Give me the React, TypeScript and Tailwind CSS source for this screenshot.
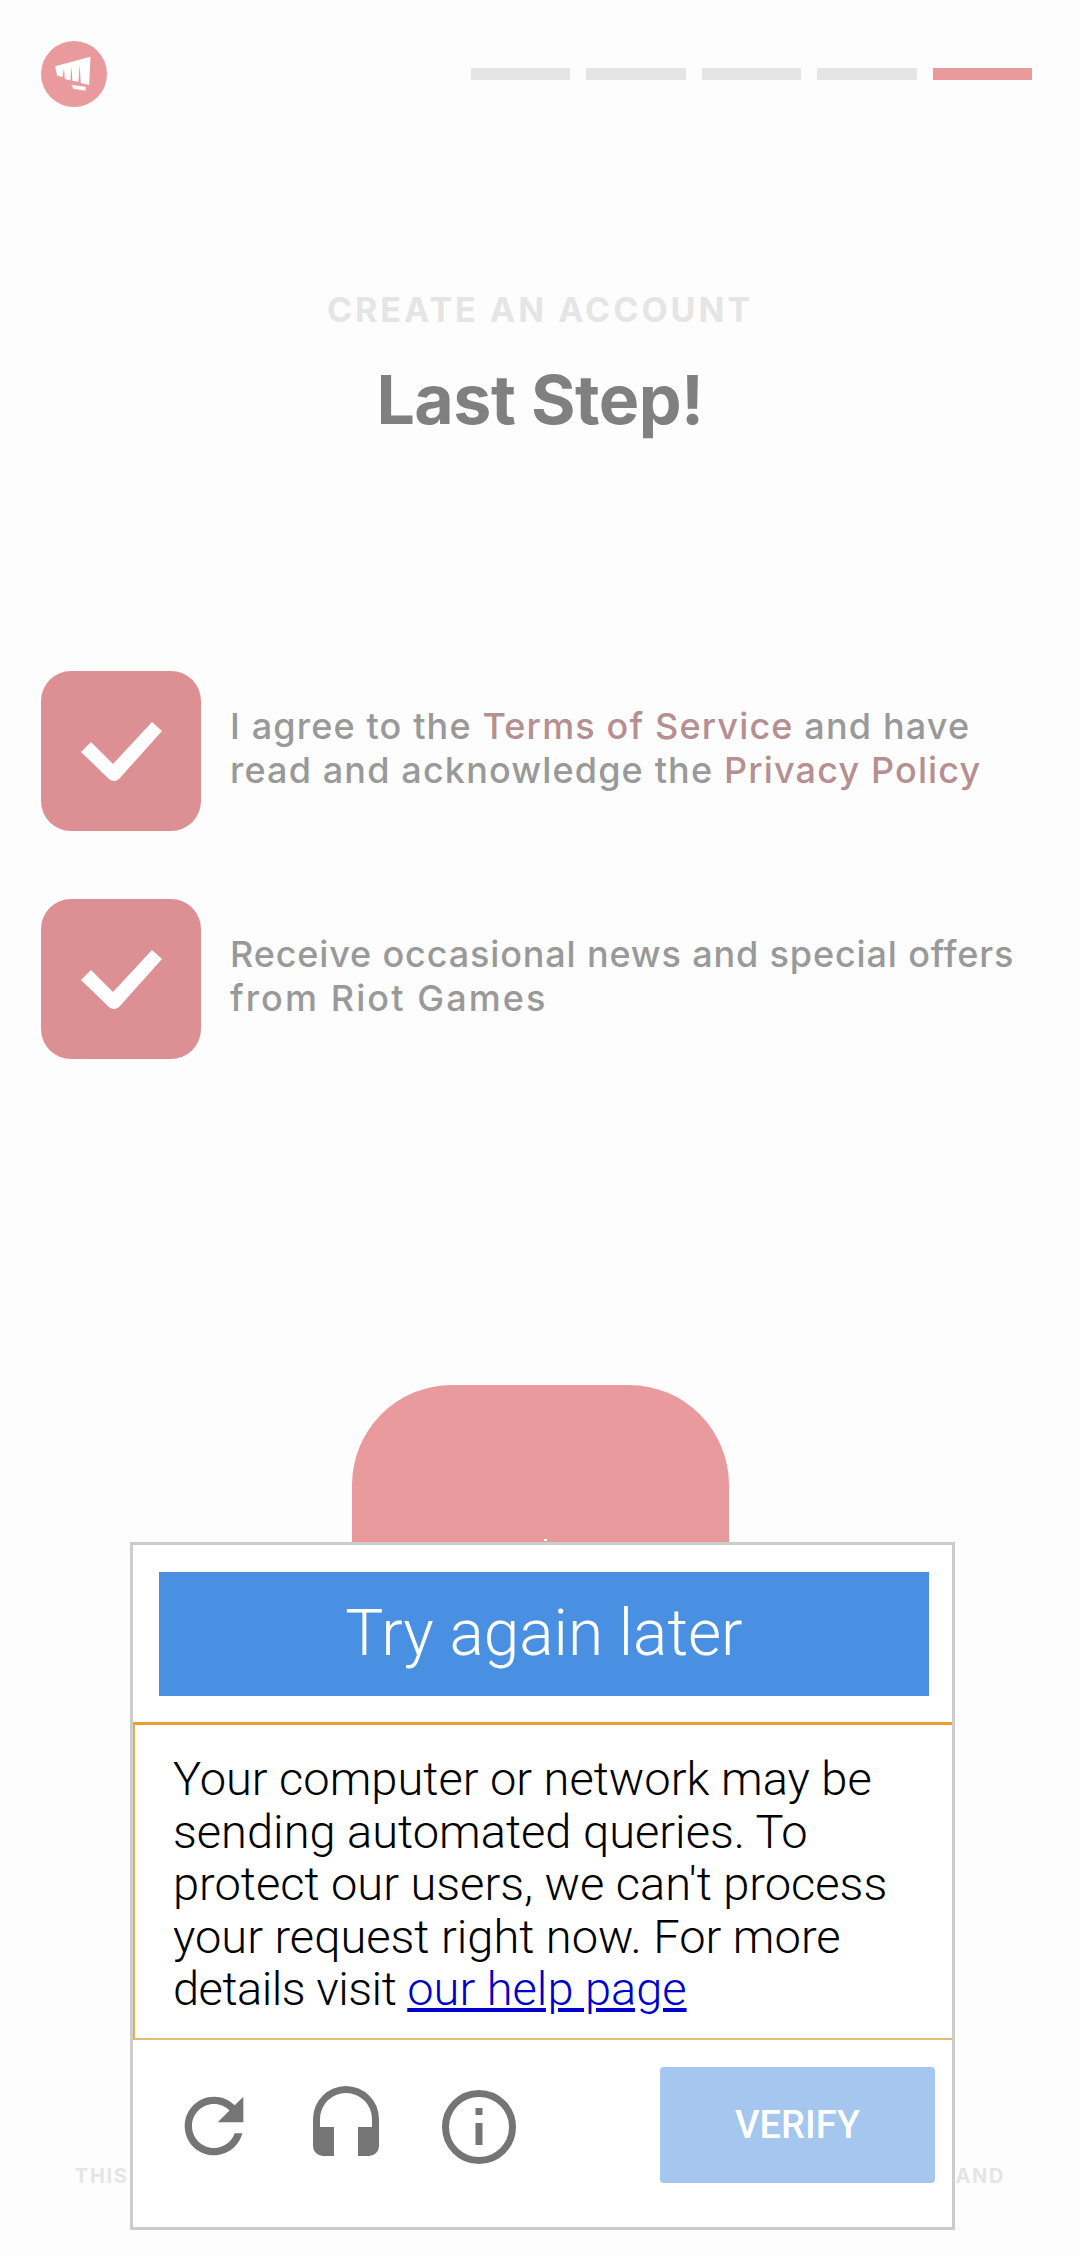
const bars = [0, 1, 2, 3, 4];

function Logo() {
  return (
    <svg className="h-[66px] w-[66px]" viewBox="65 65 196 196">
      <circle cx="163" cy="163" r="98" fill="#e99a9c" />
      <path
        fill="#ffffff"
        d="M107 140L212 112L208 196L183 190L180 135L176 186L158 183L156 140L152 182L136 178L133 146L129 172L113 168Z"
      />
      <path fill="#ffffff" d="M156 196L198 201L197 213L161 207Z" />
    </svg>
  );
}

function CheckBox() {
  return (
    <div className="flex h-[160px] w-[160px] shrink-0 items-center justify-center rounded-[30px] bg-[#dd9093]">
      <svg className="h-[160px] w-[160px]" viewBox="0 0 160 160">
        <path fill="#ffffff" d="M40 81L50 71L72 93L111 51L121 60L78 108Q73 112 68 108Z" />
      </svg>
    </div>
  );
}

function RefreshIcon() {
  return (
    <svg className="h-[88px] w-[88px]" viewBox="0 0 24 24" fill="#757575">
      <path d="M17.65 6.35C16.2 4.9 14.21 4 12 4c-4.42 0-7.99 3.58-7.99 8s3.57 8 7.99 8c3.73 0 6.84-2.55 7.73-6h-2.08c-.82 2.33-3.04 4-5.65 4-3.31 0-6-2.69-6-6s2.69-6 6-6c1.66 0 3.14.69 4.22 1.78L13 11h7V4l-2.35 2.35z" />
    </svg>
  );
}

function HeadphonesIcon() {
  return (
    <svg className="mt-[4px] ml-[55px] h-[70px] w-[66px]" viewBox="0 0 66 70" fill="#757575">
      <path d="M0 33a33 33 0 0 1 66 0V60a10 10 0 0 1-10 10H45V41H59V33a26 26 0 0 0-52 0V41H21V70H10a10 10 0 0 1-10-10Z" />
    </svg>
  );
}

function InfoIcon() {
  return (
    <svg className="mt-[8px] ml-[63px] h-[74px] w-[74px]" viewBox="0 0 74 74">
      <circle cx="37" cy="37" r="33.5" fill="none" stroke="#757575" strokeWidth="7" />
      <rect x="33.5" y="18" width="7" height="7" fill="#757575" />
      <rect x="33.5" y="33" width="7" height="22" fill="#757575" />
    </svg>
  );
}

export default function App() {
  return (
    <div className="relative h-[2256px] w-[1080px] overflow-hidden bg-[#fdfdfd] font-['Inter',sans-serif]">
      <header className="flex items-center justify-between pl-[41px] pr-[48px] pt-[41px]">
        <Logo />
        <div className="flex gap-[16px]">
          {bars.map((b) => (
            <div
              key={b}
              className={b === 4 ? "h-[12px] w-[99.5px] bg-[#e99a9c]" : "h-[12px] w-[99.5px] bg-[#e5e5e5]"}
            />
          ))}
        </div>
      </header>

      <div className="mt-[183px] text-center">
        <p className="text-[34px] font-bold leading-[40px] tracking-[3px] text-[#e5e5e5]">CREATE AN ACCOUNT</p>
        <h1 className="mt-[29px] text-[68px] font-bold leading-[80px] tracking-[-0.5px] text-[#808080]">Last Step!</h1>
      </div>

      <div className="mt-[232px] flex flex-col gap-[68px] pl-[41px]">
        <div className="flex items-center gap-[29px]">
          <CheckBox />
          <p className="mb-[6px] text-[36px] font-medium leading-[44px] tracking-[1.15px] text-[#999999]">
            I agree to the <span className="text-[#b58f91]">Terms of Service</span> and have
            <br />
            read and acknowledge the <span className="text-[#b58f91]">Privacy Policy</span>
          </p>
        </div>
        <div className="flex items-center gap-[29px]">
          <CheckBox />
          <p className="mb-[6px] text-[36px] font-medium leading-[44px] tracking-[0.85px] text-[#999999]">
            Receive occasional news and special offers
            <br />
            <span className="tracking-[2.1px]">from Riot Games</span>
          </p>
        </div>
      </div>

      <div className="relative mx-auto mt-[326px] h-[300px] w-[377px] rounded-[100px] bg-[#e99a9c]">
        <div className="absolute left-[192px] top-[154px] h-[2px] w-[3px] bg-white" />
      </div>

      <p className="mt-[479px] whitespace-nowrap text-center text-[20px] font-bold leading-[24px] tracking-[1.7px] text-[#e5e5e5]">
        THIS SITE IS PROTECTED BY RECAPTCHA AND THE GOOGLE PRIVACY POLICY AND
        <br />
        TERMS OF SERVICE APPLY.
      </p>

      {/* recaptcha popup sits over the page */}
      <div className="absolute left-[130px] top-[1542px] h-[688px] w-[825px] border-[3px] border-[#cccccc] bg-white font-['Roboto',sans-serif]">
        <div className="px-[26px] pt-[27px]">
          <div className="flex h-[124px] w-[770px] items-center justify-center bg-[#4a90e2] text-[64px] font-light text-white">
            Try again later
          </div>
        </div>
        <div className="mt-[26px] h-[318px] border-b-[2px] border-l-[2px] border-t-[3px] border-b-[#e0bd70] border-l-[#e3b050] border-t-[#e5a232] pl-[38px] pt-[28px] text-[47px] font-[350] leading-[52.5px] text-black">
          Your computer or network may be
          <br />
          sending automated queries. To
          <br />
          protect our users, we can't process
          <br />
          your request right now. For more
          <br />
          <span className="tracking-[-0.5px]">details visit </span>
          <a className="text-[#0000cc] underline">our help page</a>
        </div>
        <div className="flex items-start justify-between pl-[37px] pr-[17px] pt-[27px]">
          <div className="flex items-start pt-[15px]">
            <RefreshIcon />
            <HeadphonesIcon />
            <InfoIcon />
          </div>
          <div className="flex h-[116px] w-[275px] items-center justify-center rounded-[4px] bg-[#a4c6ef] text-[38px] font-medium text-white">
            VERIFY
          </div>
        </div>
      </div>
    </div>
  );
}
